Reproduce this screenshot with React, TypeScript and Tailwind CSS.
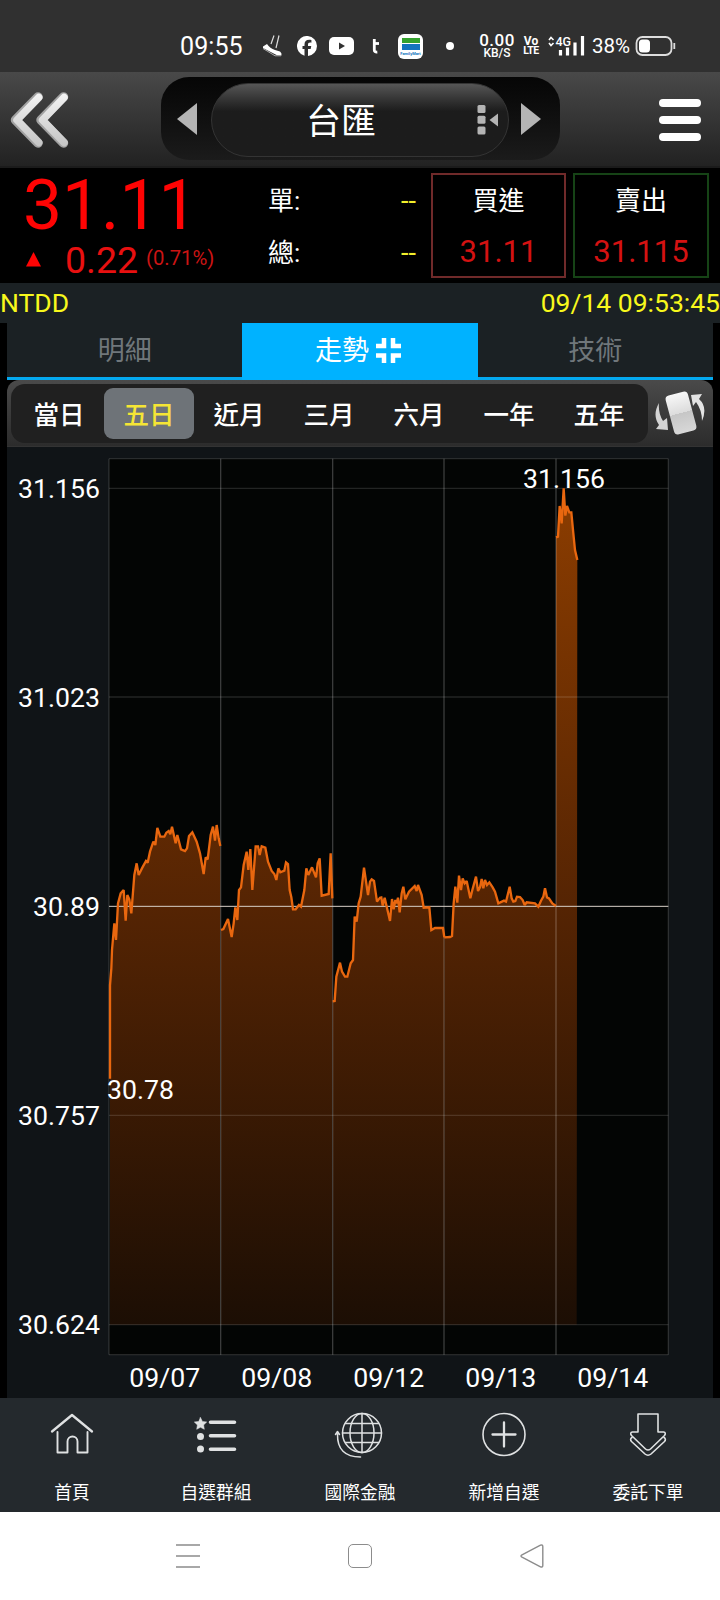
import React, { useState } from 'react';

const ranges = ['當日', '五日', '近月', '三月', '六月', '一年', '五年'];

const yLabels = [
  { text: '31.156', y: 123 },
  { text: '31.023', y: 750 },
  { text: '30.89', y: 1377 },
  { text: '30.757', y: 2005 },
  { text: '30.624', y: 2632 },
];

const dates = ['09/07', '09/08', '09/12', '09/13', '09/14'];
const gridX = [327, 662, 998, 1332, 1668, 2005];

// one line per trading day, x/y is the origin of its points
const days = [
  {
    x: 270, y: 1059, from: 60, to: 391,
    points: '60,836 60,556 64,505 66,450 73,370 78,420 84,310 92,280 101,270 107,362 112,285 118,298 124,340 133,225 140,190 146,225 157,203 168,183 173,188 180,155 190,125 196,135 202,84 211,110 223,110 229,98 236,93 241,103 246,80 257,130 262,105 273,148 285,153 291,145 297,108 307,97 320,125 330,160 341,222 347,172 353,178 362,105 369,80 375,122 380,75 386,115 391,138',
  },
  {
    x: 270, y: 1059, from: 393, to: 727,
    points: '393,390 400,387 414,357 425,411 431,370 436,322 442,360 447,270 453,262 461,195 470,155 475,210 481,147 487,270 497,139 504,139 509,165 515,139 526,143 534,185 545,213 553,222 559,240 565,205 571,217 583,212 588,187 594,192 599,270 604,292 609,328 617,328 627,315 633,320 643,270 649,205 655,225 666,202 678,232 683,190 689,175 695,287 716,282 722,160 727,295',
  },
  {
    x: 960, y: 1059, from: 40, to: 373,
    points: '38,604 44,603 49,530 60,488 66,515 75,530 82,530 92,490 99,480 104,350 110,365 116,310 122,290 132,203 144,285 150,245 155,238 162,243 171,305 180,293 184,292 188,317 194,293 210,363 216,297 221,328 226,300 230,310 234,293 239,337 245,280 250,260 256,298 267,275 284,258 290,273 294,255 305,285 311,323 328,322 334,390 345,384 369,384 373,412',
  },
  {
    x: 960, y: 1059, from: 373, to: 708,
    points: '373,412 390,411 396,408 401,310 406,260 412,308 417,227 423,270 428,235 434,250 440,243 451,295 457,270 468,230 474,273 480,262 485,237 490,265 495,240 501,255 508,247 518,262 525,275 535,310 552,302 558,305 569,260 575,295 580,305 586,303 591,290 600,291 608,300 614,315 620,307 645,310 655,320 663,302 670,290 675,265 681,292 687,295 697,310 708,318',
  },
  {
    x: 1080, y: -231, from: 588, to: 650,
    points: '588,502 594,500 599,408 605,460 611,355 616,437 621,408 628,427 634,427 640,490 645,540 652,570',
  },
];

const BASE_Y = 2633;

const StatusBar: React.FC = () => (
  <div className="flex h-[72px] items-center bg-[#303030] pt-5 pl-[180px] text-white">
    <span className="w-[82px] text-[25px] leading-none tracking-[0.1px]">09:55</span>
    <svg className="h-[22px] w-[20px]" viewBox="0 0 20 22" fill="none">
      <path d="M12 0.500 9 9M17 0.500 14 13" stroke="#ddd" strokeWidth="1.200" />
      <path d="M1 11.500 5 9q3 4.500 8 6l5 1.500q2 1.500 1.500 4l-4.500-.3L1 13Z" fill="#fff" />
      <path d="M1 13.500 13 20.800h6" stroke="#aaa" strokeWidth="1" />
    </svg>
    <svg className="ml-[15px] size-[20px]" viewBox="0 0 24 24" fill="#fff">
      <path d="M24 12a12 12 0 1 0-15 11.600v-8H6.600V12H9v-1.600c0-4 1.800-5.900 5.800-5.900.7 0 2 .1 2.500.3V8c-.3 0-.8-.1-1.400-.1-2 0-2.700.8-2.700 2.700V12h3.900l-.7 3.600h-3.200v8.300A12 12 0 0 0 24 12Z" />
    </svg>
    <svg className="ml-[12px] h-[18px] w-[25px]" viewBox="0 0 25 18">
      <rect width="25" height="18" rx="5" fill="#fff" />
      <path d="m10 5.500 6 3.500-6 3.500z" fill="#303030" />
    </svg>
    <svg className="ml-[18px] h-[16px] w-[8px]" viewBox="0 0 8 16" fill="none" stroke="#fff" strokeWidth="2.800">
      <path d="M2.300 1v11q0 2.300 3 2" />
      <path d="M2 5.500h5" />
    </svg>
    <div className="ml-[18px] flex size-[25px] flex-col items-center gap-[1px] overflow-hidden rounded-[6px] bg-white pt-[4px]">
      <div className="h-[5px] w-[18px] shrink-0 bg-[#35a22f]" />
      <div className="h-[6px] w-[18px] shrink-0 bg-[#1474bd]" />
      <span className="text-[4px] leading-[5px] font-bold text-[#1474bd]">FamilyMart</span>
    </div>
    <div className="ml-[23px] size-[8px] rounded-full bg-white" />
    <div className="ml-[24px] flex w-[38px] flex-col items-center text-center font-medium">
      <span className="text-[17px] leading-[14px] tracking-[0.500px]">0.00</span>
      <span className="text-[12px] leading-[12px]">KB/S</span>
    </div>
    <div className="ml-[6px] flex w-[18px] flex-col items-center font-bold">
      <span className="text-[12px] leading-[10px]">Vo</span>
      <span className="text-[10.500px] leading-[10px] tracking-[-0.500px]">LTE</span>
    </div>
    <svg className="ml-[7px] h-[22px] w-[40px]" viewBox="0 0 40 22">
      <path d="m2 5 2-2.500L6.500 5M2 8l2 2.500L6.500 8" fill="none" stroke="#fff" strokeWidth="1.600" />
      <text x="8.500" y="11" fontSize="12.500" fontWeight="500" fill="#fff">4G</text>
      <path d="M13.500 15v5.500M20.500 12.500v8M28 7.500v13M35.500 1v19.500" stroke="#fff" strokeWidth="3.200" />
    </svg>
    <span className="ml-[5px] w-[43px] text-[20.500px] leading-none">38%</span>
    <svg className="h-[22px] w-[42px]" viewBox="0 0 42 22">
      <rect x="1.500" y="2" width="35" height="18" rx="6" fill="none" stroke="#ddd" strokeWidth="1.800" />
      <rect x="4" y="4.500" width="11" height="13" rx="3.500" fill="#fff" />
      <path d="M39.300 8v6" stroke="#ddd" strokeWidth="1.800" />
    </svg>
  </div>
);

const Header: React.FC = () => (
  <div className="flex h-24 border-b-2 border-[#1b1b1b] bg-linear-to-b from-[#494949] to-[#222222]">
    <svg className="mt-[19px] ml-[10px] h-[58px] w-[60px]" viewBox="0 0 60 58" fill="none" strokeLinecap="round" strokeLinejoin="round">
      <defs>
        <linearGradient id="silver" x1="0" y1="0" x2="0" y2="58" gradientUnits="userSpaceOnUse">
          <stop offset="0" stopColor="#f6f6f6" />
          <stop offset="1" stopColor="#c2c2c2" />
        </linearGradient>
      </defs>
      <path d="M28 6 5.500 29 28 52M53.500 6 31 29l22.500 23" stroke="#a2a2a2" strokeWidth="9.500" />
      <path d="M28.700 6.500 7 29l21.700 22.500M54 6.500 32.500 29 54 51.500" stroke="url(#silver)" strokeWidth="7.500" />
    </svg>
    <div className="mt-[5px] ml-[91px] flex h-[83px] w-[399px] items-center rounded-[28px] bg-linear-to-b from-[#060606] to-[#1b1b1b]">
      <svg className="ml-4 h-[32px] w-[20px]" viewBox="0 0 20 32">
        <path d="M20 0v32L0 16Z" fill="#b4b4b4" />
      </svg>
      <div className="mt-[2px] ml-[14px] flex h-[74px] w-[298px] items-center rounded-full border border-[#343434] bg-linear-to-b from-[#565656] via-[#1c1c1c] via-38% to-[#1c1c1c]">
        <span className="mt-[6px] ml-[94px] w-[74px] text-[35px] leading-none text-white">台匯</span>
        <svg className="ml-[97px] h-[30px] w-[22px]" viewBox="0 0 22 30" fill="#b4b4b4">
          <rect x="0.500" width="8" height="8" rx="1.500" />
          <rect x="0.500" y="10.800" width="8" height="8" rx="1.500" />
          <rect x="0.500" y="21.500" width="8" height="8" rx="1.500" />
          <path d="M21 8.500v13L12.500 15Z" />
        </svg>
      </div>
      <svg className="ml-[12px] h-[32px] w-[20px]" viewBox="0 0 20 32">
        <path d="M0 0v32l20-16Z" fill="#b4b4b4" />
      </svg>
    </div>
    <div className="mt-[27px] ml-[99px] flex w-[42px] flex-col gap-[9px]">
      <div className="h-[8px] rounded-full bg-white" />
      <div className="h-[8px] rounded-full bg-white" />
      <div className="h-[8px] rounded-full bg-white" />
    </div>
  </div>
);

const Quote: React.FC = () => (
  <div className="flex h-[115px] bg-black">
    <div className="w-[268px] text-[#ff0404]">
      <div className="ml-[23px] h-[73px] pt-[3px] text-[69.500px] leading-[69px]">31.11</div>
      <div className="flex h-[38px] items-baseline">
        <svg className="ml-[26px] h-[21px] w-[15px]" viewBox="0 0 15 21">
          <path d="M7.500 0 15 14.500H0Z" fill="#ff0404" />
        </svg>
        <span className="ml-[24px] w-[80px] text-[37.500px] leading-[38px] text-[#e81010]">0.22</span>
        <span className="relative -top-[8px] ml-[1px] text-[20.300px] leading-none text-[#cc1414]">(0.71%)</span>
      </div>
    </div>
    <div className="flex w-[149px] flex-col pt-[7px] text-[27px] text-white">
      <div className="flex h-[52px] items-center justify-between">
        <span className="text-[26px]">單:</span>
        <span className="mr-px text-[#f2ef2c]">--</span>
      </div>
      <div className="flex h-[52px] items-center justify-between">
        <span className="text-[26px]">總:</span>
        <span className="mr-px text-[#f2ef2c]">--</span>
      </div>
    </div>
    <div className="mt-[5px] ml-[14px] flex h-[105px] w-[135px] flex-col items-center border-2 border-[#702a2a]">
      <span className="mt-[6px] text-[26px] leading-[40px] text-white">買進</span>
      <span className="mt-[11px] text-[31px] leading-[40px] text-[#d41212]">31.11</span>
    </div>
    <div className="mt-[5px] ml-[7px] flex h-[105px] w-[136px] flex-col items-center border-2 border-[#164316]">
      <span className="mt-[6px] text-[26px] leading-[40px] text-white">賣出</span>
      <span className="mt-[11px] text-[31px] leading-[40px] text-[#d41212]">31.115</span>
    </div>
  </div>
);

const Tabs: React.FC = () => (
  <div className="mx-[7px] grid h-[57px] grid-cols-3 border-b-[3px] border-[#04a9f0] bg-[#1b2124] text-[27px] text-[#70777b]">
    <div className="flex items-center justify-center pt-[3px]">明細</div>
    <div className="-mb-[3px] flex items-center justify-center gap-[7px] bg-[#00b2ff] pr-[4px] text-white">
      走勢
      <svg className="mb-[3px] size-[25px]" viewBox="0 0 25 25" fill="none" stroke="#fff" strokeWidth="4.500">
        <path d="M0 8h8V0M17 0v8h8M0 17.500h8V25M17 25v-7.500h8" />
      </svg>
    </div>
    <div className="flex items-center justify-center pt-[3px]">技術</div>
  </div>
);

const RangeBar: React.FC<{ selected: string; setSelected: (range: string) => void }> = ({ selected, setSelected }) => (
  <div className="mx-[7px] flex h-[67px] rounded-t-[12px] border-b border-[#333] bg-linear-to-b from-[#4a4a4a] to-[#2c2c2c] pt-1 pl-1">
    <div className="flex h-[59px] w-[637px] items-center rounded-[14px] bg-[#202020] pl-[3px]">
      {ranges.map((range) => (
        <button
          key={range}
          onClick={() => setSelected(range)}
          className={
            range === selected
              ? 'h-[51px] w-[90px] shrink-0 rounded-[9px] bg-[#6e7378] pt-[3px] text-[25.500px] font-medium text-[#f5e535]'
              : 'h-[51px] w-[90px] shrink-0 pt-[3px] text-[25.500px] font-medium text-white'
          }
        >
          {range}
        </button>
      ))}
    </div>
    <svg className="mt-[6px] ml-[7px] h-[46px] w-[50px]" viewBox="0 0 50 46">
      <defs>
        <linearGradient id="phone" x1="0" y1="0" x2="0" y2="1">
          <stop offset="0" stopColor="#f8f8f8" />
          <stop offset="0.500" stopColor="#dcdcdc" />
          <stop offset="0.500" stopColor="#c6c6c6" />
          <stop offset="1" stopColor="#d8d8d8" />
        </linearGradient>
      </defs>
      <rect x="14.500" y="3" width="23" height="40" rx="4" transform="rotate(-15 26 23)" fill="url(#phone)" />
      <path d="M4 13Q-3 25 4 35l-3 4 12 1-1-12-4 3Q3 23 4 13Z" fill="#d4d4d4" />
      <path d="M47 31q6-14-3-22l3-5-11 1 2 11 3-4q6 8 6 19Z" fill="#e4e4e4" />
    </svg>
  </div>
);

const TrendChart: React.FC = () => (
  <div className="mx-[7px] h-[951px] bg-[#101417]">
    {/* three plot units per pixel */}
    <svg className="-ml-[7px] h-[951px] w-[720px] max-w-none" viewBox="0 0 2160 2853">
      <defs>
        <linearGradient id="area" gradientUnits="userSpaceOnUse" x1="0" y1="123" x2="0" y2={BASE_Y}>
          <stop offset="0" stopColor="#8c3d00" />
          <stop offset="0.500" stopColor="#552403" />
          <stop offset="1" stopColor="#1c0e04" />
        </linearGradient>
      </defs>
      <rect x="327" y="35" width="1678" height="2688" fill="#030504" />
      <g fill="url(#area)">
        {days.map((day) => (
          <polygon
            key={day.x + day.from}
            points={`${day.x + day.from},${BASE_Y} ${day.points
              .split(' ')
              .map((p) => p.split(',').map(Number))
              .map(([px, py]) => `${day.x + px},${day.y + py}`)
              .join(' ')} ${day.x + day.to},${BASE_Y}`}
          />
        ))}
      </g>
      <g stroke="#fff" strokeWidth="4">
        {gridX.map((x, i) => (
          <path key={x} d={`M${x} 35V2723`} strokeOpacity={i === 0 || i === 5 ? 0.14 : 0.22} />
        ))}
        {[35, 124, 750, 2005, BASE_Y, 2723].map((y) => (
          <path key={y} d={`M327 ${y}H2005`} strokeOpacity="0.130" />
        ))}
      </g>
      <path d="M327 1378H2005" stroke="#d8d0c8" strokeWidth="3" />
      <g fill="none" stroke="#e9670f" strokeWidth="7" strokeLinejoin="miter" strokeMiterlimit="2">
        {days.map((day) => (
          <polyline key={day.x + day.from} points={day.points} transform={`translate(${day.x} ${day.y})`} />
        ))}
      </g>
      <g fill="#fff" fontSize="80">
        {yLabels.map((label) => (
          <text key={label.text} x="300" y={label.y + 30} textAnchor="end">{label.text}</text>
        ))}
        {dates.map((date, i) => (
          <text key={date} x={494 + i * 336} y="2819" textAnchor="middle">{date}</text>
        ))}
        <text x="1569" y="123">31.156</text>
        <text x="321" y="1956">30.78</text>
      </g>
    </svg>
  </div>
);

const navItems = [
  {
    label: '首頁',
    icon: (
      <g strokeWidth="1.900">
        <path d="M4 19.500 24 3l20 16.500" strokeWidth="2.300" />
        <path d="M9.500 20v20.500h10V29.500a4.500 4.500 0 0 1 10 0v11h10V20" />
      </g>
    ),
  },
  {
    label: '自選群組',
    icon: (
      <g>
        <path d="m8.500 5.500 1.900 3.900 4.300.6-3.100 3 .7 4.300-3.800-2-3.800 2 .7-4.300-3.100-3 4.300-.6Z" fill="#dfe1e2" strokeWidth="0.500" />
        <circle cx="8.500" cy="24.500" r="3.500" fill="#dfe1e2" stroke="none" />
        <circle cx="8.500" cy="37" r="3.500" fill="#dfe1e2" stroke="none" />
        <path d="M18.500 10.300h24M18.500 23.700h24M18.500 37.200h24" strokeWidth="3.600" />
      </g>
    ),
  },
  {
    label: '國際金融',
    icon: (
      <g strokeWidth="1.500">
        <circle cx="26" cy="21" r="19.500" />
        <ellipse cx="26" cy="21" rx="12" ry="19.500" />
        <path d="M26 1.500v39M6.500 21h39M9.500 11.500h33M9.500 30.500h33" />
        <path d="M1.500 22q-.5 23 23 23M-.5 22.500l2-3 2 3" />
      </g>
    ),
  },
  {
    label: '新增自選',
    icon: (
      <g strokeWidth="1.600">
        <circle cx="24" cy="22.500" r="21" />
        <path d="M24 10.500v24M12.500 22.500h23" strokeWidth="2.300" />
      </g>
    ),
  },
  {
    label: '委託下單',
    icon: (
      <g strokeWidth="1.600">
        <path d="M14 2h20v18h5.500q3 .5 1 3.500L26.500 37q-2.500 2-5 0L7.500 23.500q-2-3 1-3.500H14Z" />
        <path d="M8 25.500q-2.500 1.500-.5 4L21 42q3 2.500 6 0L40.500 29.500q2-2.500-.5-4" />
      </g>
    ),
  },
];

const BottomNav: React.FC = () => (
  <div className="grid h-[114px] grid-cols-5 bg-[#24292d]">
    {navItems.map((item) => (
      <div key={item.label} className="flex flex-col items-center">
        <svg className="mt-[14px] size-[48px] overflow-visible" viewBox="0 0 48 48" fill="none" stroke="#dfe1e2" strokeLinecap="round" strokeLinejoin="round">
          {item.icon}
        </svg>
        <span className="mt-[20px] text-[17.700px] leading-[26px] text-white">{item.label}</span>
      </div>
    ))}
  </div>
);

const SystemNav: React.FC = () => (
  <div className="flex h-[88px] items-center bg-white pl-[176px]">
    <svg className="h-6 w-6" viewBox="0 0 24 24" stroke="#8c8c8c" strokeWidth="1.600">
      <path d="M0 1h24M0 12h24M0 23h24" />
    </svg>
    <div className="ml-[148px] size-6 rounded-[5px] border-[1.500px] border-[#8c8c8c]" />
    <svg className="ml-[148px] h-6 w-6" viewBox="0 0 24 24" fill="none" stroke="#8c8c8c" strokeWidth="1.400" strokeLinejoin="round">
      <path d="M2 10.800 20.500 1.200q2.300-.8 2.300 1.300v19q0 2-2.300 1.300L2 13.200q-2-1.200 0-2.400Z" />
    </svg>
  </div>
);

const App: React.FC = () => {
  const [selected, setSelected] = useState<string>('五日');

  return (
    <div className="h-[1600px] w-[720px] overflow-hidden bg-black font-['Roboto','Noto_Sans_CJK_TC',sans-serif]">
      <StatusBar />
      <Header />
      <Quote />
      <div className="flex h-10 items-center justify-between bg-[#1b2124] text-[26.500px] text-[#f8f81c]">
        <span>NTDD</span>
        <span>09/14 09:53:45</span>
      </div>
      <Tabs />
      <RangeBar selected={selected} setSelected={setSelected} />
      <TrendChart />
      <BottomNav />
      <SystemNav />
    </div>
  );
};

export default App;
